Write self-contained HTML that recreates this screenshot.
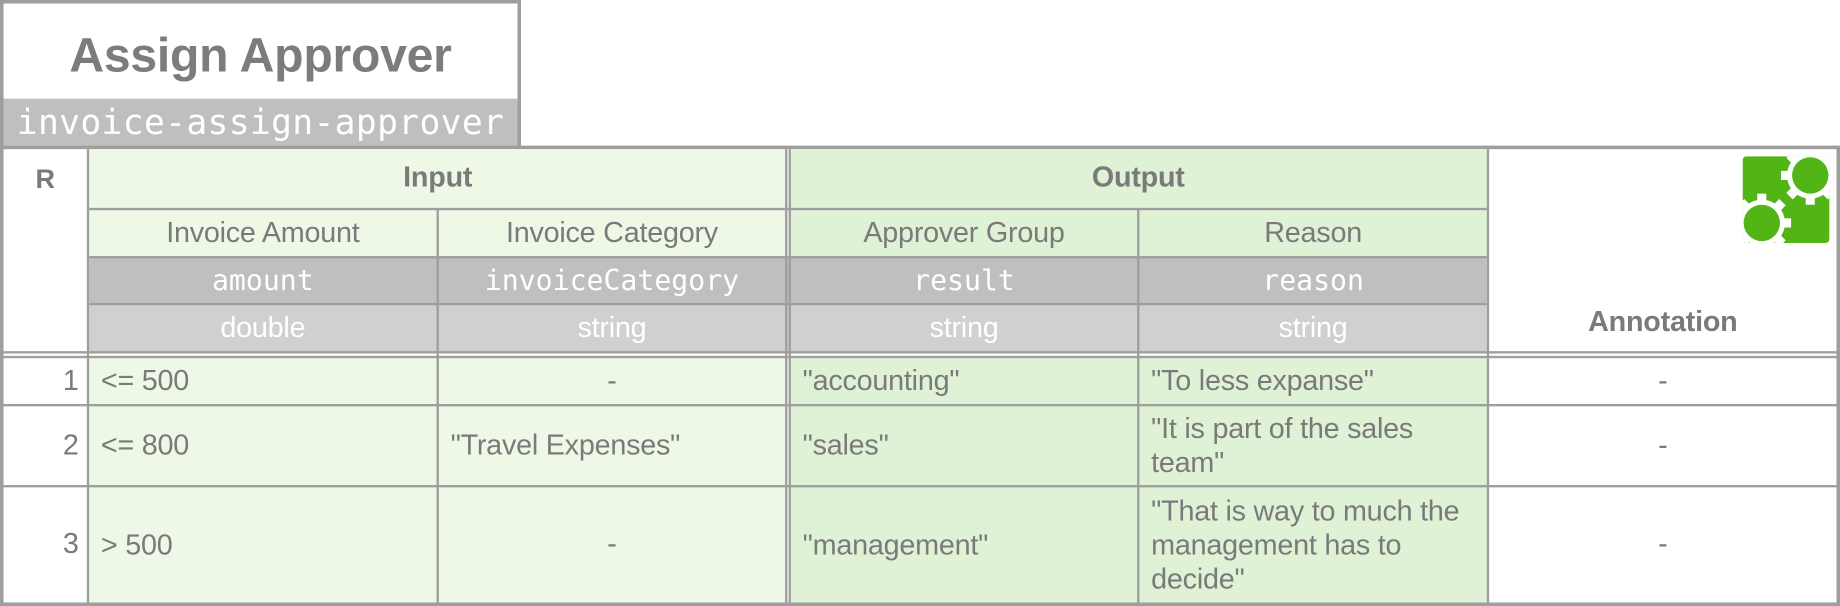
<!DOCTYPE html>
<html><head><style>
html,body{margin:0;padding:0;background:#fff;width:1840px;height:606px;overflow:hidden}
#w{position:absolute;left:0;top:0;width:1568px;height:516px;transform:scale(1.17347,1.1744);transform-origin:0 0;font-family:"Liberation Sans",Arial,sans-serif;color:#777}
.a{position:absolute;box-sizing:border-box}
.c{position:absolute;box-sizing:border-box;display:flex;align-items:center;justify-content:center;font-size:24.5px;color:#7a7a7a;letter-spacing:-0.2px}
.m{font-family:"DejaVu Sans Mono","Liberation Mono",monospace;color:#fff;font-size:24px;letter-spacing:0}
.t{color:#fff}
.l{justify-content:flex-start;padding-left:10px;line-height:29px}
.b{font-weight:bold}
</style></head><body><div id="w">
<div class="a" style="left:0;top:0;width:444px;height:127px;border:3px solid #9e9e9e;border-bottom:none"></div>
<div class="c b" style="left:3px;top:18px;width:438px;height:58px;font-size:41px;color:#7c7c7c">Assign Approver</div>
<div class="c m" style="left:3px;top:84px;width:438px;height:40px;background:#bfbfbf;font-size:29.5px;letter-spacing:0.3px">invoice-assign-approver</div>
<div class="a" style="left:0;top:124px;width:1568px;height:392px;border:3px solid #9e9e9e"></div>
<div class="a" style="left:76px;top:127px;width:594px;height:52px;background:#eef8e6"></div>
<div class="a" style="left:673px;top:127px;width:594px;height:52px;background:#dff2d5"></div>
<div class="a" style="left:76px;top:179px;width:594px;height:40px;background:#eef8e6"></div>
<div class="a" style="left:673px;top:179px;width:594px;height:40px;background:#dff2d5"></div>
<div class="a" style="left:76px;top:219px;width:1191px;height:40px;background:#bfbfbf"></div>
<div class="a" style="left:76px;top:260px;width:1191px;height:40px;background:#d0d0d0"></div>
<div class="a" style="left:76px;top:305px;width:594px;height:208px;background:#eef8e6"></div>
<div class="a" style="left:673px;top:305px;width:594px;height:208px;background:#dff2d5"></div>
<div class="a" style="left:74px;top:127px;width:2px;height:386px;background:#9e9e9e"></div>
<div class="a" style="left:372px;top:178px;width:2px;height:335px;background:#9e9e9e"></div>
<div class="a" style="left:669px;top:127px;width:2px;height:386px;background:#9e9e9e"></div>
<div class="a" style="left:672px;top:127px;width:2px;height:386px;background:#9e9e9e"></div>
<div class="a" style="left:969px;top:178px;width:2px;height:335px;background:#9e9e9e"></div>
<div class="a" style="left:1267px;top:127px;width:2px;height:386px;background:#9e9e9e"></div>
<div class="a" style="left:76px;top:177px;width:1191px;height:2px;background:#9e9e9e"></div>
<div class="a" style="left:76px;top:218px;width:1191px;height:2px;background:#9e9e9e"></div>
<div class="a" style="left:76px;top:258px;width:1191px;height:2px;background:#9e9e9e"></div>
<div class="a" style="left:3px;top:299px;width:1562px;height:2px;background:#9e9e9e"></div>
<div class="a" style="left:3px;top:303px;width:1562px;height:2px;background:#9e9e9e"></div>
<div class="a" style="left:3px;top:344px;width:1562px;height:2px;background:#9e9e9e"></div>
<div class="a" style="left:3px;top:413px;width:1562px;height:2px;background:#9e9e9e"></div>
<div class="c b" style="left:3px;top:132px;width:71px;height:40px;font-size:23px">R</div>
<div class="c b" style="left:76px;top:127px;width:594px;height:50px">Input</div>
<div class="c b" style="left:673px;top:127px;width:594px;height:50px">Output</div>
<div class="c" style="left:76px;top:179px;width:296px;height:39px">Invoice Amount</div>
<div class="c" style="left:374px;top:179px;width:295px;height:39px">Invoice Category</div>
<div class="c" style="left:674px;top:179px;width:295px;height:39px">Approver Group</div>
<div class="c" style="left:971px;top:179px;width:296px;height:39px">Reason</div>
<div class="c m" style="left:76px;top:220px;width:296px;height:38px">amount</div>
<div class="c m" style="left:374px;top:220px;width:295px;height:38px">invoiceCategory</div>
<div class="c m" style="left:674px;top:220px;width:295px;height:38px">result</div>
<div class="c m" style="left:971px;top:220px;width:296px;height:38px">reason</div>
<div class="c t" style="left:76px;top:260px;width:296px;height:39px">double</div>
<div class="c t" style="left:374px;top:260px;width:295px;height:39px">string</div>
<div class="c t" style="left:674px;top:260px;width:295px;height:39px">string</div>
<div class="c t" style="left:971px;top:260px;width:296px;height:39px">string</div>
<div class="c b" style="left:1269px;top:255px;width:296px;height:40px">Annotation</div>
<svg class="a" style="left:1485px;top:133px;width:74px;height:74px" viewBox="0 0 86 86">
<defs><clipPath id="k"><rect x="0" y="0" width="86" height="86" rx="4"/></clipPath></defs>
<g clip-path="url(#k)">
<rect x="0" y="0" width="86" height="86" fill="#52b415"/>
<g stroke="#fff" stroke-width="9" fill="#fff">
<g transform="translate(67,19)"><circle r="23" stroke="none"/><line x1="0" y1="-29" x2="0" y2="29"/><line x1="-29" y1="0" x2="29" y2="0"/><line x1="-20.5" y1="-20.5" x2="20.5" y2="20.5"/><line x1="-20.5" y1="20.5" x2="20.5" y2="-20.5"/></g>
<g transform="translate(19,66)"><circle r="23" stroke="none"/><line x1="0" y1="-29" x2="0" y2="29"/><line x1="-29" y1="0" x2="29" y2="0"/><line x1="-20.5" y1="-20.5" x2="20.5" y2="20.5"/><line x1="-20.5" y1="20.5" x2="20.5" y2="-20.5"/></g>
</g>
<circle cx="67" cy="19" r="18" fill="#52b415"/>
<circle cx="19" cy="66" r="18" fill="#52b415"/>
</g>
</svg>
<div class="c" style="left:3px;top:305px;width:64px;height:39px;justify-content:flex-end">1</div>
<div class="c l" style="left:76px;top:305px;width:296px;height:39px">&lt;= 500</div>
<div class="c" style="left:374px;top:305px;width:295px;height:39px">-</div>
<div class="c l" style="left:674px;top:305px;width:295px;height:39px">"accounting"</div>
<div class="c l" style="left:971px;top:305px;width:296px;height:39px">"To less expanse"</div>
<div class="c" style="left:1269px;top:305px;width:296px;height:39px">-</div>
<div class="c" style="left:3px;top:346px;width:64px;height:67px;justify-content:flex-end">2</div>
<div class="c l" style="left:76px;top:346px;width:296px;height:67px">&lt;= 800</div>
<div class="c l" style="left:374px;top:346px;width:295px;height:67px">"Travel Expenses"</div>
<div class="c l" style="left:674px;top:346px;width:295px;height:67px">"sales"</div>
<div class="c l" style="left:971px;top:346px;width:296px;height:67px;padding-right:30px">"It is part of the sales team"</div>
<div class="c" style="left:1269px;top:346px;width:296px;height:67px">-</div>
<div class="c" style="left:3px;top:415px;width:64px;height:98px;justify-content:flex-end">3</div>
<div class="c l" style="left:76px;top:415px;width:296px;height:98px">&gt; 500</div>
<div class="c" style="left:374px;top:415px;width:295px;height:98px">-</div>
<div class="c l" style="left:674px;top:415px;width:295px;height:98px">"management"</div>
<div class="c l" style="left:971px;top:415px;width:296px;height:98px;padding-right:8px">"That is way to much the management has to decide"</div>
<div class="c" style="left:1269px;top:415px;width:296px;height:98px">-</div>
</div></body></html>
